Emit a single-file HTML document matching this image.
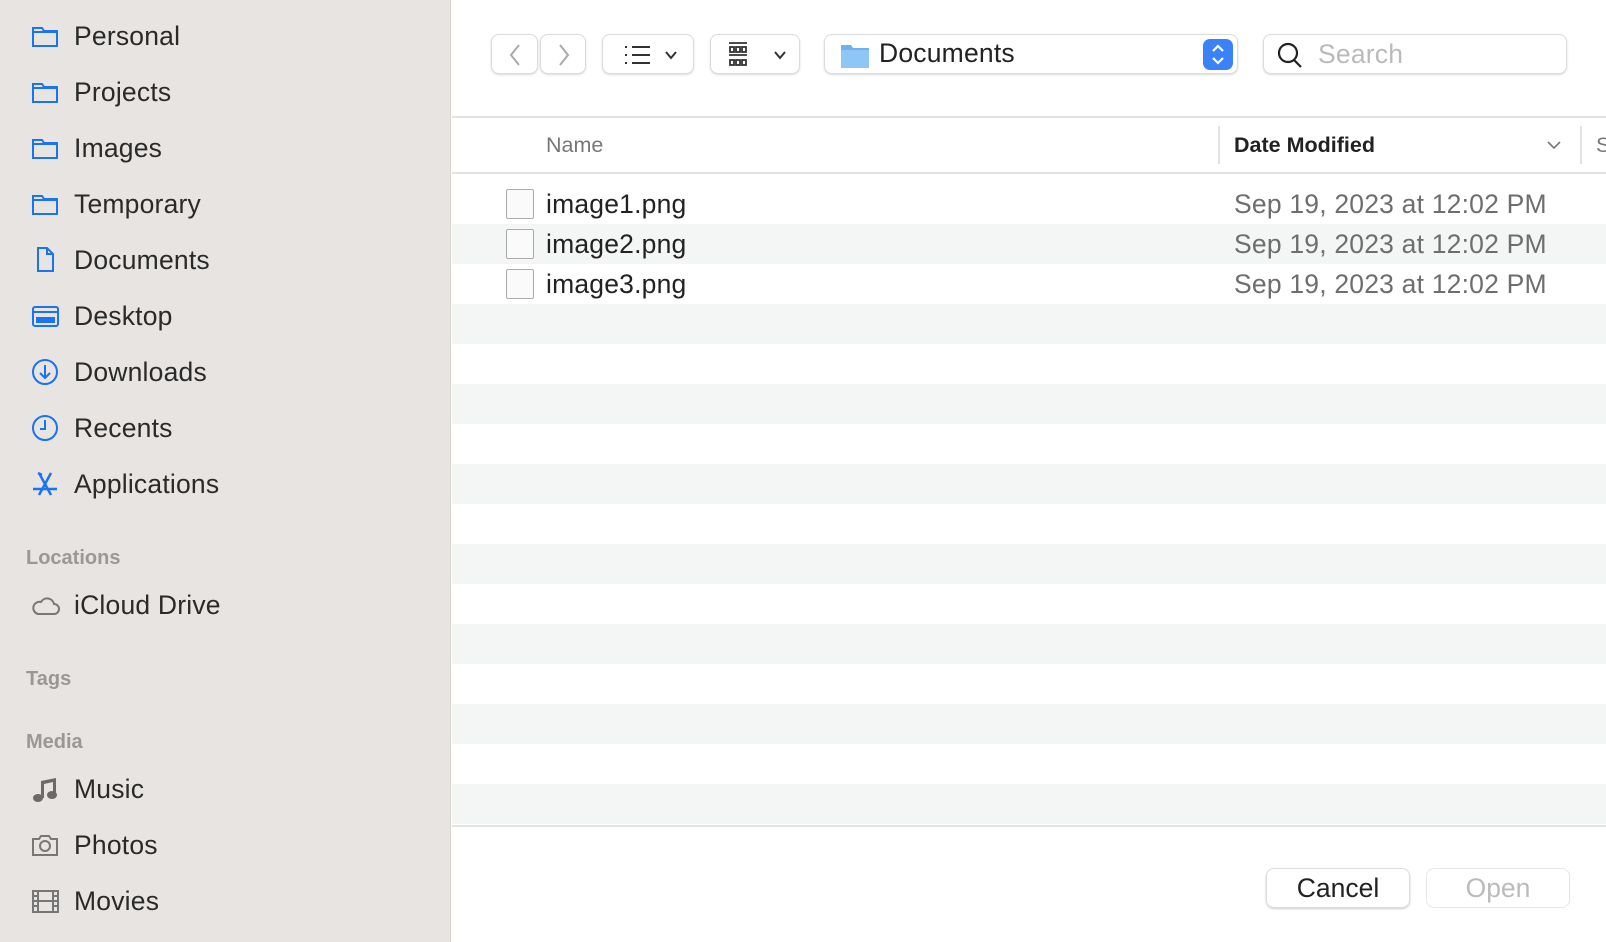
<!DOCTYPE html>
<html><head><meta charset="utf-8"><style>
*{margin:0;padding:0;box-sizing:border-box}
body{width:1606px;height:942px;overflow:hidden;background:#fff;font-family:"Liberation Sans",sans-serif;position:relative}
.sb{position:absolute;left:0;top:0;width:451px;height:942px;background:#e8e4e1;border-right:1px solid #d8d4d1}
.it{position:absolute;left:74px;font-size:26.5px;color:#2a2a2a;line-height:30px;letter-spacing:.2px}
.ic{position:absolute;left:30px;width:30px;height:30px}
.hd{position:absolute;left:26px;font-size:20px;color:#9a9794;font-weight:bold;line-height:24px}
.btn{position:absolute;top:34px;height:40px;background:#fff;border:1px solid #dcdcdc;border-radius:8px;box-shadow:0 1px 2px rgba(0,0,0,.15)}
.row{position:absolute;left:452px;width:1154px;height:40px}
.fn{position:absolute;left:546px;font-size:26.5px;color:#222;line-height:30px;letter-spacing:.2px}
.dt{position:absolute;left:1234px;font-size:26.5px;color:#6e6e6e;line-height:30px;letter-spacing:.2px}
.fi{position:absolute;left:506px;width:28px;height:30px;border:1.5px solid #aaa;background:#fafafa;border-radius:2px}
</style></head><body>
<div class="sb">
<svg class="ic" style="top:21px" viewBox="0 0 30 30" fill="none" stroke="#1a73f0" stroke-width="2"><path d="M3 7h9l2 3h13v15H3z M3 11h24"/></svg>
<div class="it" style="top:21px">Personal</div>
<svg class="ic" style="top:77px" viewBox="0 0 30 30" fill="none" stroke="#1a73f0" stroke-width="2"><path d="M3 7h9l2 3h13v15H3z M3 11h24"/></svg>
<div class="it" style="top:77px">Projects</div>
<svg class="ic" style="top:133px" viewBox="0 0 30 30" fill="none" stroke="#1a73f0" stroke-width="2"><path d="M3 7h9l2 3h13v15H3z M3 11h24"/></svg>
<div class="it" style="top:133px">Images</div>
<svg class="ic" style="top:189px" viewBox="0 0 30 30" fill="none" stroke="#1a73f0" stroke-width="2"><path d="M3 7h9l2 3h13v15H3z M3 11h24"/></svg>
<div class="it" style="top:189px">Temporary</div>
<svg class="ic" style="top:245px" viewBox="0 0 30 30" fill="none" stroke="#1a73f0" stroke-width="2"><path d="M8 3h9l6 6v17H8z M17 3v6h6"/></svg>
<div class="it" style="top:245px">Documents</div>
<svg class="ic" style="top:301px" viewBox="0 0 30 30" fill="none" stroke="#1a73f0" stroke-width="2"><rect x="3" y="6" width="25" height="19" rx="2"/><path d="M3 11h25"/><rect x="7" y="17" width="17" height="4" fill="#1a73f0"/></svg>
<div class="it" style="top:301px">Desktop</div>
<svg class="ic" style="top:357px" viewBox="0 0 30 30" fill="none" stroke="#1a73f0" stroke-width="2"><circle cx="15" cy="15" r="12"/><path d="M15 8v13M10 16l5 5 5-5"/></svg>
<div class="it" style="top:357px">Downloads</div>
<svg class="ic" style="top:413px" viewBox="0 0 30 30" fill="none" stroke="#1a73f0" stroke-width="2"><circle cx="15" cy="15" r="12"/><path d="M15 7v9h-5"/></svg>
<div class="it" style="top:413px">Recents</div>
<svg class="ic" style="top:469px" viewBox="0 0 30 30" fill="none" stroke="#1a73f0" stroke-width="2.5"><path d="M9 4l12 22M21 4L9 26M3 20h24M8 4l4 2"/></svg>
<div class="it" style="top:469px">Applications</div>
<div class="hd" style="top:546px">Locations</div>
<svg class="ic" style="top:590px" viewBox="0 0 30 30" fill="none" stroke="#777" stroke-width="2"><path d="M8 24h16a5 5 0 0 0 0-10 7 7 0 0 0-13-2 6 6 0 0 0-3 12z"/></svg>
<div class="it" style="top:590px">iCloud Drive</div>
<div class="hd" style="top:667px">Tags</div>
<div class="hd" style="top:730px">Media</div>
<svg class="ic" style="top:774px" viewBox="0 0 30 30" fill="#6a6a6a"><ellipse cx="8" cy="24" rx="5" ry="4"/><ellipse cx="22" cy="21" rx="5" ry="4"/><path d="M11 24V7l15-3v17h-3V8l-9 2v14z"/></svg>
<div class="it" style="top:774px">Music</div>
<svg class="ic" style="top:830px" viewBox="0 0 30 30" fill="none" stroke="#777" stroke-width="2"><path d="M3 9h6l2-3h8l2 3h6v16H3z"/><circle cx="15" cy="16" r="5"/></svg>
<div class="it" style="top:830px">Photos</div>
<svg class="ic" style="top:886px" viewBox="0 0 30 30" fill="none" stroke="#777" stroke-width="2"><rect x="3" y="5" width="25" height="21"/><path d="M8 5v21M23 5v21M8 15h15M3 10h5M3 15h5M3 20h5M23 10h5M23 15h5M23 20h5"/></svg>
<div class="it" style="top:886px">Movies</div>
</div>

<div class="btn" style="left:491px;width:47px"><svg width="47" height="40" viewBox="0 0 47 40" fill="none" stroke="#aaa" stroke-width="2"><path d="M27 10l-8 10 8 10"/></svg></div>
<div class="btn" style="left:540px;width:46px"><svg width="46" height="40" viewBox="0 0 46 40" fill="none" stroke="#aaa" stroke-width="2"><path d="M19 10l8 10-8 10"/></svg></div>
<div class="btn" style="left:602px;width:92px"><svg width="92" height="40" viewBox="0 0 92 40" fill="none" stroke="#333" stroke-width="2"><path d="M29 12h18M29 20h18M29 28h18M22 12h2M22 20h2M22 28h2M63 17l5 6 5-6"/></svg></div>
<div class="btn" style="left:710px;width:90px"><svg width="90" height="40" viewBox="0 0 90 40" fill="none" stroke="#333" stroke-width="1.8"><path d="M18 8h18M18 20h18"/><rect x="19" y="12" width="4" height="5"/><rect x="25" y="12" width="4" height="5"/><rect x="31" y="12" width="4" height="5"/><rect x="19" y="25" width="4" height="5"/><rect x="25" y="25" width="4" height="5"/><rect x="31" y="25" width="4" height="5"/><path d="M64 17l5 6 5-6" stroke-width="2"/></svg></div>
<div class="btn" style="left:824px;width:414px">
<svg style="position:absolute;left:14px;top:6px" width="32" height="28" viewBox="0 0 32 28"><path d="M2 4h10l2 3h16v20H2z" fill="#6fb1ef"/><path d="M2 9h28v18H2z" fill="#8ec6f5"/></svg>
<div style="position:absolute;left:54px;top:3px;font-size:26.5px;color:#222;letter-spacing:.2px">Documents</div>
<div style="position:absolute;right:4px;top:4px;width:30px;height:31px;background:#3a82f7;border-radius:7px"><svg width="30" height="31" viewBox="0 0 30 31" fill="none" stroke="#fff" stroke-width="2.2"><path d="M10 12l5-5 5 5M10 19l5 5 5-5"/></svg></div>
</div>
<div class="btn" style="left:1263px;width:304px">
<svg style="position:absolute;left:12px;top:6px" width="30" height="28" viewBox="0 0 30 28" fill="none" stroke="#222" stroke-width="2.2"><circle cx="12" cy="12" r="9"/><path d="M18 19l7 7"/></svg>
<div style="position:absolute;left:54px;top:4px;font-size:26.5px;color:#bbb;letter-spacing:.2px">Search</div>
</div>

<div style="position:absolute;left:452px;top:116px;width:1154px;height:2px;background:#e2e2e2"></div>
<div style="position:absolute;left:546px;top:133px;font-size:21.5px;color:#777">Name</div>
<div style="position:absolute;left:1218px;top:126px;width:2px;height:38px;background:#e2e2e2"></div>
<div style="position:absolute;left:1234px;top:133px;font-size:21.5px;color:#222;font-weight:bold">Date Modified</div>
<svg style="position:absolute;left:1545px;top:138px" width="18" height="14" viewBox="0 0 18 14" fill="none" stroke="#777" stroke-width="1.6"><path d="M3 4l6 6 6-6"/></svg>
<div style="position:absolute;left:1580px;top:126px;width:2px;height:38px;background:#e2e2e2"></div>
<div style="position:absolute;left:1596px;top:133px;font-size:21.5px;color:#777">S</div>
<div style="position:absolute;left:452px;top:172px;width:1154px;height:2px;background:#e2e2e2"></div>

<div class="row" style="top:224px;background:#f4f5f5"></div>
<div class="row" style="top:304px;background:#f4f5f5"></div>
<div class="row" style="top:384px;background:#f4f5f5"></div>
<div class="row" style="top:464px;background:#f4f5f5"></div>
<div class="row" style="top:544px;background:#f4f5f5"></div>
<div class="row" style="top:624px;background:#f4f5f5"></div>
<div class="row" style="top:704px;background:#f4f5f5"></div>
<div class="row" style="top:784px;background:#f4f5f5"></div>

<div class="fi" style="top:189px"></div><div class="fn" style="top:189px">image1.png</div><div class="dt" style="top:189px">Sep 19, 2023 at 12:02 PM</div>
<div class="fi" style="top:229px"></div><div class="fn" style="top:229px">image2.png</div><div class="dt" style="top:229px">Sep 19, 2023 at 12:02 PM</div>
<div class="fi" style="top:269px"></div><div class="fn" style="top:269px">image3.png</div><div class="dt" style="top:269px">Sep 19, 2023 at 12:02 PM</div>

<div style="position:absolute;left:452px;top:825px;width:1154px;height:2px;background:#e2e2e2"></div>
<div style="position:absolute;left:1266px;top:868px;width:144px;height:40px;background:#fff;border:1px solid #ddd;border-radius:8px;box-shadow:0 1px 2px rgba(0,0,0,.2);text-align:center;font-size:26.5px;line-height:38px;color:#222">Cancel</div>
<div style="position:absolute;left:1426px;top:868px;width:144px;height:40px;background:#fff;border:1px solid #e6e6e6;border-radius:8px;text-align:center;font-size:26.5px;line-height:38px;color:#bbb">Open</div>
</body></html>
